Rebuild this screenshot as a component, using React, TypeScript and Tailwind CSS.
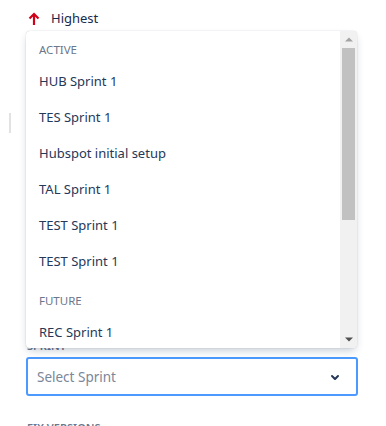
import React from "react";

const active = ["HUB Sprint 1", "TES Sprint 1", "Hubspot initial setup", "TAL Sprint 1", "TEST Sprint 1", "TEST Sprint 1"];
const future = ["REC Sprint 1", "REC Sprint 2"];

export default function App() {
  return (
    <div
      className="relative w-[386px] h-[426px] bg-white overflow-hidden text-[#253858]"
      style={{ fontFamily: '"Noto Sans", "Segoe UI", sans-serif' }}
    >
      {/* Priority row */}
      <div className="h-[36px] flex items-center pl-[28px] pt-[2px]">
        <svg width="12" height="14" viewBox="0 0 12 14" className="mr-[11px] -mt-[1px]">
          <path d="M6 13V2.5M1.5 6.5L6 2l4.5 4.5" stroke="#d0021b" strokeWidth="2.2" fill="none" strokeLinecap="butt" />
        </svg>
        <span className="text-[13px] text-[#172b4d]">Highest</span>
      </div>

      {/* hidden fields area */}
      <div className="h-[302px] pt-[77px]">
        <div className="ml-[9px] w-[2px] h-[20px] bg-[#e2e2e2]" />
      </div>

      {/* Sprint field */}
      <div className="px-[26px]">
        <div className="h-[16px] leading-[16px] text-[11px] font-semibold text-[#6b778c] pl-[1px]">SPRINT</div>
        <div className="mt-[3px] h-[39px] w-[332px] border-2 border-[#4c9aff] rounded-[3px] flex items-center justify-between pl-[9px] pr-[9px]">
          <span className="text-[13.5px] text-[#7a869a] pt-[2px]">Select Sprint</span>
          <svg width="24" height="24" viewBox="0 0 24 24">
            <path
              fill="#253858"
              d="M8.292 10.293a1.009 1.009 0 0 0 0 1.419l2.939 2.965c.218.215.5.322.779.322s.556-.107.769-.322l2.93-2.955a1.01 1.01 0 0 0 0-1.419.987.987 0 0 0-1.406 0l-2.298 2.317-2.307-2.327a.99.99 0 0 0-1.406 0z"
            />
          </svg>
        </div>
        <div className="mt-[24px] h-[16px] leading-[16px] text-[11px] font-semibold text-[#6b778c] pl-[1px]">FIX VERSIONS</div>
      </div>

      {/* Dropdown menu overlay */}
      <div className="absolute left-[26px] top-[31px] w-[331px] h-[317px] bg-white rounded-[4px] shadow-[0_4px_8px_-2px_rgba(9,30,66,0.25),0_0_1px_rgba(9,30,66,0.31)] flex overflow-hidden">
        <div className="flex-1 overflow-hidden">
          <div className="pt-[9px]">
            <div className="h-[20px] leading-[20px] px-[13px] text-[11.5px] text-[#6b778c] mb-[3px]">ACTIVE</div>
            {active.map((s, i) => (
              <div key={i} className="h-[36px] flex items-center px-[13px] pt-[2px] text-[13px]">{s}</div>
            ))}
          </div>
          <div className="pt-[12px]">
            <div className="h-[20px] leading-[20px] px-[13px] text-[11.5px] text-[#6b778c] mb-[3px]">FUTURE</div>
            {future.map((s, i) => (
              <div key={i} className="h-[36px] flex items-center px-[13px] pt-[2px] text-[13px]">{s}</div>
            ))}
          </div>
        </div>
        {/* scrollbar */}
        <div className="w-[17px] bg-[#f1f1f1] flex flex-col">
          <div className="h-[17px] flex items-center justify-center">
            <svg width="8" height="5" viewBox="0 0 8 5"><path d="M0 4.5L4 0.5L8 4.5Z" fill="#a3a3a3" /></svg>
          </div>
          <div className="mx-[2px] h-[172px] bg-[#c1c1c1]" />
          <div className="flex-1" />
          <div className="h-[17px] flex items-center justify-center">
            <svg width="8" height="5" viewBox="0 0 8 5"><path d="M0 0.5L4 4.5L8 0.5Z" fill="#505050" /></svg>
          </div>
        </div>
      </div>
    </div>
  );
}
